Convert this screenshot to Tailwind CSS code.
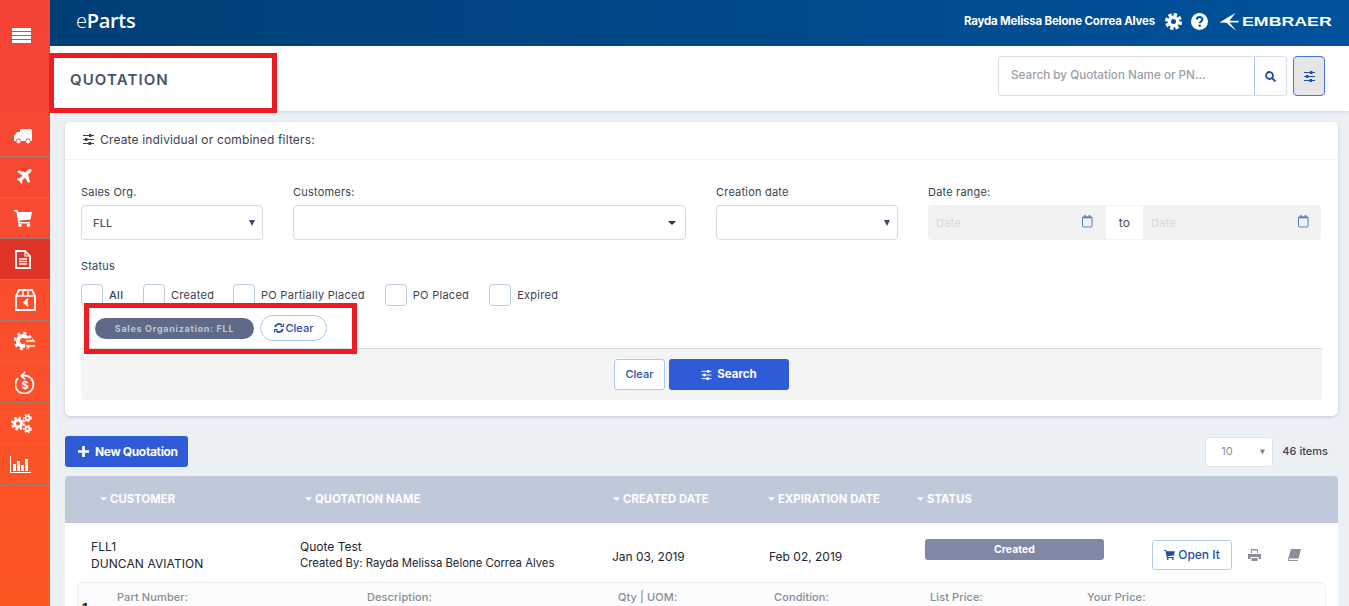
<!DOCTYPE html>
<html lang="en">
<head>
    <meta charset="UTF-8">
    <meta name="viewport" content="width=device-width, initial-scale=1.0">
    <title>eParts - Quotation</title>
    <script src="https://cdn.jsdelivr.net/npm/@tailwindcss/browser@4"></script>
</head>
<body class="h-[606px] overflow-hidden bg-[#ebf0f5] font-['Inter',sans-serif] text-[#2b3240]">
<div class="relative flex h-[606px] overflow-hidden">

    <!-- side menu -->
    <aside class="w-[50px] shrink-0 h-full bg-gradient-to-b from-[#f44336] to-[#ff5722] text-white">
        <div class="h-[116px] flex justify-center pt-[28px] pr-[7px]">
            <svg class="w-[19px] h-[15px]" viewBox="0 0 19 15" fill="#fff"><rect width="19" height="3" y="0"/><rect width="19" height="3" y="4"/><rect width="19" height="3" y="8"/><rect width="19" height="3" y="12"/></svg>
        </div>
        <div class="h-[41px] flex items-center justify-center border-b border-[#a8796f] pr-[6px]">
            <svg class="w-[19px] h-[15px]" viewBox="0 0 19 15" fill="#fff"><path d="M7 0h10.500a1.500 1.500 0 0 1 1.500 1.500V12h-1.500a2.500 2.500 0 0 0-5 0H8a2.500 2.500 0 0 0-5 0H1V7l3-4h3z"/><circle cx="5.500" cy="12.500" r="2"/><circle cx="15" cy="12.500" r="2"/></svg>
        </div>
        <div class="h-[41px] flex items-center justify-center border-b border-[#a8796f] pr-[2px]">
            <svg class="w-[16px] h-[16px]" viewBox="0 0 16 16" fill="#fff"><path d="M15.500.500c-1-1-2.800-.3-3.800.7L9.500 3.400 2.800 1.500 1.300 3l5.400 3.400-2.900 2.900-2-.4L.500 10.200l3 1.700 1.700 3 1.300-1.300-.4-2 2.900-2.900L12.500 14l1.500-1.500-1.900-6.700 2.200-2.200c1-1 1.700-2.600.7-3.600z"/></svg>
        </div>
        <div class="h-[41px] flex items-center justify-center border-b border-[#a8796f] pr-[5px]">
            <svg class="w-[18px] h-[17px]" viewBox="0 0 18 17" fill="#fff"><path d="M0 0h3.500l.5 2h14l-1.500 7.500L5.500 10.500l.3 1.500H16v1.500H4.300L2.300 1.500H0z"/><circle cx="6" cy="15.200" r="1.700"/><circle cx="14.500" cy="15.200" r="1.700"/></svg>
        </div>
        <div class="h-[41px] flex items-center justify-center border-b border-[#a8796f] bg-[#e03426] pr-[4px]">
            <svg class="w-[16px] h-[19px]" viewBox="0 0 16 19" fill="none" stroke="#fff" stroke-width="1.800"><path d="M1 1h9l5 5v12H1z"/><path d="M10 1v5h5" stroke-width="1.200"/><path d="M4 9h8M4 11.500h8M4 14h8" stroke-width="1.400"/></svg>
        </div>
        <div class="h-[41px] flex items-center justify-center border-b border-[#a8796f]">
            <svg class="w-[21px] h-[22px]" viewBox="0 0 21 22" fill="none" stroke="#fff" stroke-width="1.800"><path d="M1 7l3-6h13l3 6v14H1z"/><path d="M1 7h19M8 1v6M13 1v6" stroke-width="1.400"/><path d="M13 10l-4 3.500 4 3.500M9 13.500h4" stroke-width="1.800"/></svg>
        </div>
        <div class="h-[41px] flex items-center justify-center border-b border-[#a8796f]">
            <svg class="w-[22px] h-[20px]" viewBox="0 0 22 20" fill="none" stroke="#fff"><circle cx="9" cy="10" r="5" stroke-width="4"/><circle cx="9" cy="10" r="8" stroke-width="2.500" stroke-dasharray="3 3.300"/><path d="M11 10h10M11 15h10" stroke="#ff5722" stroke-width="5"/><path d="M12 10h8l-2-2M21 15h-8l2 2" stroke-width="1.500"/></svg>
        </div>
        <div class="h-[41px] flex items-center justify-center border-b border-[#a8796f] pr-[1px]">
            <svg class="w-[20px] h-[23px]" viewBox="0 0 20 23" fill="none" stroke="#fff" stroke-width="1.800"><path d="M6 5.200a9 9 0 1 1-3 2"/><path d="M10 1L6 5l4 3" stroke-width="1.600"/><text x="10" y="18" text-anchor="middle" font-size="11" font-weight="700" fill="#fff" stroke="none" font-family="Inter, sans-serif">$</text></svg>
        </div>
        <div class="h-[41px] flex items-center justify-center border-b border-[#a8796f] pr-[8px]">
            <svg class="w-[21px] h-[19px]" viewBox="0 0 21 19" fill="none" stroke="#fff"><circle cx="7" cy="9.500" r="3.500" stroke-width="3"/><circle cx="7" cy="9.500" r="6" stroke-width="2" stroke-dasharray="2.500 2.200"/><circle cx="16.500" cy="4" r="2" stroke-width="1.800"/><circle cx="16.500" cy="4" r="3.500" stroke-width="1.400" stroke-dasharray="1.800 1.500"/><circle cx="16.500" cy="15" r="2" stroke-width="1.800"/><circle cx="16.500" cy="15" r="3.500" stroke-width="1.400" stroke-dasharray="1.800 1.500"/></svg>
        </div>
        <div class="h-[41px] flex items-center justify-center border-b border-[#a8796f] pr-[9px]">
            <svg class="w-[21px] h-[17px]" viewBox="0 0 21 17" fill="#fff"><path d="M0 0h1v16h20v1H0z"/><rect x="3" y="8" width="3" height="7"/><rect x="7" y="5" width="3" height="10"/><rect x="11" y="9" width="3" height="6"/><rect x="15" y="3" width="3" height="12"/></svg>
        </div>
    </aside>

    <div class="flex-1 min-w-0">
        <!-- top bar -->
        <header class="h-[46px] bg-gradient-to-r from-[#003f76] to-[#00529b] flex items-center text-white pl-[26px] pr-[17px]">
            <div class="font-['Open_Sans',sans-serif] text-[20px] font-semibold tracking-[-0.3px] -mt-[5px]"><span class="font-light">e</span>Parts</div>
            <div class="ml-auto flex items-center -mt-[3px]">
                <span class="text-[11.5px] font-bold tracking-[-0.2px]">Rayda Melissa Belone Correa Alves</span>
                <svg class="w-[17px] h-[17px] ml-[10px]" viewBox="0 0 17 17" fill="none" stroke="#fff"><circle cx="8.500" cy="8.500" r="4.200" stroke-width="3.400"/><circle cx="8.500" cy="8.500" r="7" stroke-width="3" stroke-dasharray="3.400 2.100"/></svg>
                <svg class="w-[17px] h-[17px] ml-[9px]" viewBox="0 0 17 17"><circle cx="8.500" cy="8.500" r="8.500" fill="#fff"/><path d="M5.800 6.500c0-3.400 5.600-3.400 5.600 0 0 2-2.700 2-2.700 3.700" fill="none" stroke="#00509a" stroke-width="2"/><rect x="7.600" y="11.600" width="2.200" height="2.200" fill="#00509a"/></svg>
                <svg class="w-[20px] h-[18px] ml-[11px]" viewBox="0 0 19 18" fill="#fff"><path d="M0 9.500L9 4l7-4-6 7.800h9v1.600h-9L17 18l-7-5.500-3-2.800z"/></svg>
                <span class="ml-[3px] w-[90px] text-[12px] font-bold leading-none origin-left scale-x-[1.48] font-['Liberation_Sans',sans-serif]">EMBRAER</span>
            </div>
        </header>

        <!-- page title -->
        <div class="h-[65px] bg-white flex items-center pl-[20px] pr-[24px] shadow-[0_1px_3px_rgba(120,135,160,0.25)] relative">
            <h1 class="text-[15px] font-semibold tracking-[1.1px] text-[#47526e] mt-[3px]">QUOTATION</h1>
            <div class="ml-auto flex items-center -mt-[5px]">
                <div class="flex h-[40px] w-[289px] border border-[#d5deea] rounded-[4px] overflow-hidden">
                    <div class="flex-1 pl-[12px] flex items-center text-[11.7px] font-medium text-[#9a9ea6]">Search by Quotation Name or PN...</div>
                    <div class="w-[32px] border-l border-[#a9c4ee] flex items-center justify-center">
                        <svg class="w-[11px] h-[11px]" viewBox="0 0 11 11" fill="none" stroke="#1f4ea3" stroke-width="1.800"><circle cx="4.500" cy="4.500" r="3.500"/><path d="M7 7l3.500 3.500"/></svg>
                    </div>
                </div>
                <div class="ml-[6px] w-[32px] h-[40px] rounded-[4px] border border-[#3f78d8] bg-[#e6e6e6] flex items-center justify-center">
                    <svg class="w-[11px] h-[11px]" viewBox="0 0 11 11" fill="none" stroke="#1f4ea3"><path d="M0 1.500h11M0 5.500h11M0 9.500h11"/><rect x="6.500" y=".5" width="1.500" height="2" fill="#1f4ea3"/><rect x="2.500" y="4.500" width="1.500" height="2" fill="#1f4ea3"/><rect x="6" y="8.500" width="1.500" height="2" fill="#1f4ea3"/></svg>
                </div>
            </div>
        </div>

        <main class="pl-[15px] pr-[11px] pt-[11px]">
            <!-- filters card -->
            <section class="h-[294px] bg-white rounded-[5px] shadow-[0_1px_3px_rgba(120,135,160,0.35)]">
                <div class="h-[38px] border-b border-[#f1f3f6] flex items-center pl-[18px] pb-[2px] text-[12px] tracking-[0.16px] text-[#3c4250]">
                    <svg class="w-[11px] h-[11px] mr-[6px]" viewBox="0 0 11 11" fill="none" stroke="#3c4250"><path d="M0 1.500h11M0 5.500h11M0 9.500h11"/><rect x="6.500" y=".5" width="1.500" height="2" fill="#3c4250"/><rect x="2.500" y="4.500" width="1.500" height="2" fill="#3c4250"/><rect x="6" y="8.500" width="1.500" height="2" fill="#3c4250"/></svg>
                    Create individual or combined filters:
                </div>
                <div class="px-[16px] pt-[26px]">
                    <div class="grid grid-cols-[182px_393px_182px_393px] gap-x-[30px] text-[11px] tracking-[0.2px] text-[#3c4250]">
                        <div>
                            <div class="h-[13px] leading-[13px] mb-[6px]">Sales Org.</div>
                            <div class="h-[35px] border border-[#d5dbe6] rounded-[4px] flex items-center pl-[11px] pr-[7px] text-[#47526e] font-medium"><span class="mt-[1px]">FLL</span>
                                <svg class="ml-auto w-[6px] h-[6px]" viewBox="0 0 6 6" fill="#3d4a66"><path d="M0 0h6L3 6z"/></svg>
                            </div>
                        </div>
                        <div>
                            <div class="h-[13px] leading-[13px] mb-[6px]">Customers:</div>
                            <div class="h-[35px] border border-[#d5dbe6] rounded-[4px] flex items-center pr-[9px]">
                                <svg class="ml-auto w-[8px] h-[4px]" viewBox="0 0 8 4" fill="#2b3240"><path d="M0 0h8L4 4z"/></svg>
                            </div>
                        </div>
                        <div>
                            <div class="h-[13px] leading-[13px] mb-[6px]">Creation date</div>
                            <div class="h-[35px] border border-[#d5dbe6] rounded-[4px] flex items-center pr-[7px]">
                                <svg class="ml-auto w-[6px] h-[6px]" viewBox="0 0 6 6" fill="#3d4a66"><path d="M0 0h6L3 6z"/></svg>
                            </div>
                        </div>
                        <div>
                            <div class="h-[13px] leading-[13px] mb-[6px]">Date range:</div>
                            <div class="h-[35px] flex">
                                <div class="w-[178px] bg-[#f2f2f2] rounded-l-[4px] flex items-center pl-[8px] pr-[13px] text-[#d8d9dc]">
                                    <span class="mt-[1px]">Date</span>
                                    <svg class="ml-auto -mt-[3px] w-[11px] h-[13px]" viewBox="0 0 11 13" fill="none" stroke="#4f7cc0"><rect x=".5" y="2" width="9.500" height="10" rx="1"/><path d="M.5 2.500h9.500M3 0v2.500M7.500 0v2.500" stroke-width="1.500"/></svg>
                                </div>
                                <div class="w-[37px] flex items-center justify-center text-[12px] text-[#4a4f58] border-y border-[#f4f4f4]">to</div>
                                <div class="w-[178px] bg-[#f2f2f2] rounded-r-[4px] flex items-center pl-[8px] pr-[12px] text-[#d8d9dc]">
                                    <span class="mt-[1px]">Date</span>
                                    <svg class="ml-auto -mt-[3px] w-[11px] h-[13px]" viewBox="0 0 11 13" fill="none" stroke="#4f7cc0"><rect x=".5" y="2" width="9.500" height="10" rx="1"/><path d="M.5 2.500h9.500M3 0v2.500M7.500 0v2.500" stroke-width="1.500"/></svg>
                                </div>
                            </div>
                        </div>
                    </div>

                    <div class="mt-[20px] h-[13px] leading-[13px] text-[11px] tracking-[0.2px] text-[#3c4250]">Status</div>
                    <div class="mt-[11px] flex items-center text-[11px] tracking-[0.28px] text-[#3c4250] h-[22px]">
                        <span class="w-[22px] h-[22px] border border-[#bccbe0] rounded-[4px] mr-[6px]"></span><span class="font-medium mr-[20px] w-[14px]">All</span>
                        <span class="w-[22px] h-[22px] border border-[#bccbe0] rounded-[4px] mr-[6px]"></span><span class="mr-[20px] w-[42px]">Created</span>
                        <span class="w-[22px] h-[22px] border border-[#bccbe0] rounded-[4px] mr-[6px]"></span><span class="mr-[20px] whitespace-nowrap">PO Partially Placed</span>
                        <span class="w-[22px] h-[22px] border border-[#bccbe0] rounded-[4px] mr-[6px]"></span><span class="mr-[20px] whitespace-nowrap">PO Placed</span>
                        <span class="w-[22px] h-[22px] border border-[#bccbe0] rounded-[4px] mr-[6px]"></span><span>Expired</span>
                    </div>
                    <div class="mt-[9px] flex items-center h-[26px] pl-[14px]">
                        <span class="w-[159px] h-[21px] rounded-full bg-[#5e6a88] text-[#bfc5d2] text-[9px] font-bold tracking-[0.7px] flex items-center justify-center mt-[1px] pt-[1px]">Sales Organization: FLL</span>
                        <span class="ml-[6px] w-[67px] h-[26px] rounded-full border border-[#a9c8f2] text-[#1f4ea3] text-[11px] font-medium flex items-center justify-center">
                            <svg class="w-[10px] h-[10px] mr-[2px]" viewBox="0 0 10 10" fill="none" stroke="#1f4ea3" stroke-width="1.700"><path d="M1 4a4 4 0 0 1 7-1.500M9 6a4 4 0 0 1-7 1.500"/><path d="M9.500 .5v3h-3M.5 9.500v-3h3" stroke-width="1"/></svg>Clear
                        </span>
                    </div>
                    <div class="mt-[7px] h-[52px] bg-[#f4f4f4] border-t border-[#d5dde8] rounded-b-[4px] flex items-center justify-center">
                        <span class="w-[51px] h-[31px] bg-white border border-[#a9c8f2] rounded-[3px] text-[#1f4ea3] text-[11px] font-medium flex items-center justify-center">Clear</span>
                        <span class="ml-[4px] w-[120px] h-[31px] bg-[#2f5bd8] rounded-[3px] text-white text-[11.5px] font-bold flex items-center justify-center pt-[1px]">
                            <svg class="w-[11px] h-[10px] mr-[5px]" viewBox="0 0 11 11" fill="none" stroke="#fff"><path d="M0 1.500h11M0 5.500h11M0 9.500h11"/><rect x="6.500" y=".5" width="1.500" height="2" fill="#fff"/><rect x="2.500" y="4.500" width="1.500" height="2" fill="#fff"/><rect x="6" y="8.500" width="1.500" height="2" fill="#fff"/></svg>Search
                        </span>
                    </div>
                </div>
            </section>

            <!-- list toolbar -->
            <div class="mt-[20px] h-[31px] flex items-center">
                <span class="w-[123px] h-[31px] bg-[#2f5bd8] rounded-[3px] text-white text-[12px] font-bold tracking-[-0.35px] flex items-center pl-[13px]">
                    <svg class="w-[11px] h-[11px] mr-[6px]" viewBox="0 0 10 10" fill="#fff"><path d="M3.800 0h2.400v3.800H10v2.400H6.200V10H3.800V6.200H0V3.800h3.800z"/></svg>New Quotation
                </span>
                <div class="ml-auto flex items-center">
                    <div class="w-[68px] h-[30px] bg-white border border-[#dfe4ec] rounded-[3px] flex items-center pl-[15px] pr-[7px] text-[11px] text-[#8a8f99]">10
                        <svg class="ml-auto w-[5px] h-[6px]" viewBox="0 0 6 6" fill="#7d828c"><path d="M0 0h6L3 6z"/></svg>
                    </div>
                    <span class="ml-[9px] mr-[10px] text-[11px] font-medium text-[#3c4250]">46 items</span>
                </div>
            </div>

            <!-- quotation table -->
            <section class="mt-[9px] bg-white rounded-t-[4px]">
                <div class="h-[47px] bg-[#bfc9da] rounded-t-[4px] grid grid-cols-[205px_308px_155px_149px_1fr] pl-[35px] items-center text-[11.2px] font-bold text-white tracking-[0.15px]">
                    <div class="flex items-center"><svg class="w-[7px] h-[4px] mr-[3px]" viewBox="0 0 6 3" fill="#fff"><path d="M0 0h6L3 3z"/></svg>CUSTOMER</div>
                    <div class="flex items-center"><svg class="w-[7px] h-[4px] mr-[3px]" viewBox="0 0 6 3" fill="#fff"><path d="M0 0h6L3 3z"/></svg>QUOTATION NAME</div>
                    <div class="flex items-center"><svg class="w-[7px] h-[4px] mr-[3px]" viewBox="0 0 6 3" fill="#fff"><path d="M0 0h6L3 3z"/></svg>CREATED DATE</div>
                    <div class="flex items-center"><svg class="w-[7px] h-[4px] mr-[3px]" viewBox="0 0 6 3" fill="#fff"><path d="M0 0h6L3 3z"/></svg>EXPIRATION DATE</div>
                    <div class="flex items-center"><svg class="w-[7px] h-[4px] mr-[3px]" viewBox="0 0 6 3" fill="#fff"><path d="M0 0h6L3 3z"/></svg>STATUS</div>
                </div>
                <div class="h-[59px] grid grid-cols-[209px_312px_157px_156px_227px_1fr] pl-[26px] items-center text-[#22262e]">
                    <div class="text-[12px] tracking-[0.08px] leading-[17px] mt-[5px]">FLL1<br>DUNCAN AVIATION</div>
                    <div class="mt-[5px]">
                        <div class="text-[12px] leading-[17px]">Quote Test</div>
                        <div class="text-[11.3px] leading-[17px]">Created By: Rayda Melissa Belone Correa Alves</div>
                    </div>
                    <div class="text-[12px] mt-[9px]">Jan 03, 2019</div>
                    <div class="text-[12px] mt-[9px]">Feb 02, 2019</div>
                    <div class="h-[59px] pt-[16px]">
                        <div class="w-[179px] h-[21px] rounded-[3px] bg-[#8088a6] text-white text-[10.5px] font-bold flex items-center justify-center">Created</div>
                    </div>
                    <div class="flex items-center mt-[4px]">
                        <span class="w-[80px] h-[30px] border border-[#b5cdf2] rounded-[3px] text-[#1f4ea3] text-[12px] font-medium flex items-center justify-center">
                            <svg class="w-[11px] h-[10px] mr-[3px]" viewBox="0 0 18 17" fill="#1f4ea3"><path d="M0 0h3.500l.5 2h14l-1.500 7.500L5.500 10.500l.3 1.500H16v1.500H4.300L2.300 1.500H0z"/><circle cx="6" cy="15.200" r="1.700"/><circle cx="14.500" cy="15.200" r="1.700"/></svg>Open It
                        </span>
                        <svg class="w-[13px] h-[12px] ml-[16px]" viewBox="0 0 13 12" fill="#8b8f98"><path d="M3 0h6l1 1v3H9V1.500H4V4H3zM0 5h13v5h-2.500V8h-8v2H0zM3.500 9h6v3h-6z"/></svg>
                        <svg class="w-[13px] h-[12px] ml-[27px]" viewBox="0 0 13 12" fill="#8b8f98"><path d="M3 0h10L10.500 9.500H1.500L1 11h9l-.3 1H0l.2-2.500z"/></svg>
                    </div>
                </div>
                <div class="mx-[12px] h-[40px] border border-[#eef1f4] rounded-t-[4px] bg-[#fbfcfc] grid grid-cols-[250px_251px_156px_156px_157px_1fr] pl-[39px] pt-[6px] text-[11px] tracking-[0.1px] font-medium text-[#8a8d92] relative">
                    <div>Part Number:</div>
                    <div>Description:</div>
                    <div>Qty | UOM:</div>
                    <div>Condition:</div>
                    <div>List Price:</div>
                    <div>Your Price:</div>
                    <span class="absolute left-[4px] top-[16px] text-[13px] font-bold text-[#22262e]">1</span>
                </div>
            </section>
        </main>
    </div>

    <!-- red highlight boxes drawn over the screenshot -->
    <div class="absolute left-[49px] top-[53px] w-[228px] h-[60px] border-[5px] border-[#ed1c24]"></div>
    <div class="absolute left-[84px] top-[303px] w-[273px] h-[51px] border-[5px] border-[#ed1c24]"></div>
</div>
</body>
</html>
